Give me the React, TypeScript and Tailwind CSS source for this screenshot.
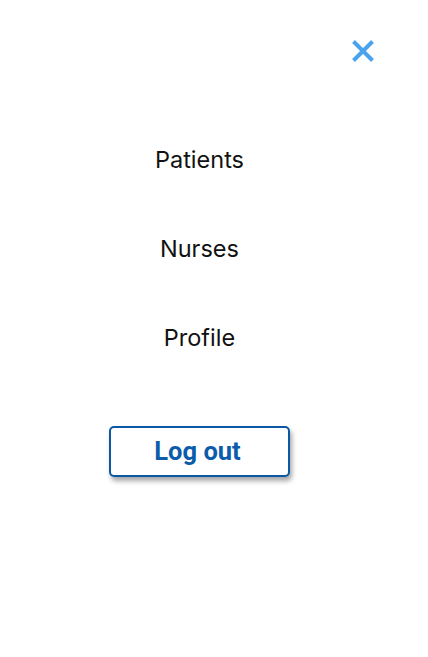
const links = ["Patients", "Nurses", "Profile"];

const App = () => {
  return (
    <div className="min-h-screen w-full bg-white relative font-['Inter',sans-serif]">
      <button className="absolute top-[39px] right-[53px] text-[#4ba3ee]">
        <svg width="24" height="24" viewBox="0 0 24 24" fill="none" stroke="currentColor" strokeWidth="4">
          <path d="M2.5 2.5L21.5 21.5M21.5 2.5L2.5 21.5" />
        </svg>
      </button>

      <div className="w-[399px] flex flex-col items-center pt-[147px]">
        <nav className="flex flex-col items-center gap-[63px]">
          {links.map((l) => (
            <a key={l} className="text-[23.5px] leading-[26px] text-[#111]">
              {l}
            </a>
          ))}
        </nav>

        <button className="mt-[75px] w-[181px] h-[51px] pr-[4px] rounded-[5px] border-2 border-[#0b58a4] bg-white shadow-[2px_4px_5px_rgba(0,0,0,0.35)] text-[#0b5cab] font-['Roboto',sans-serif] font-bold text-[25.5px]">
          Log out
        </button>
      </div>
    </div>
  );
};

export default App;
